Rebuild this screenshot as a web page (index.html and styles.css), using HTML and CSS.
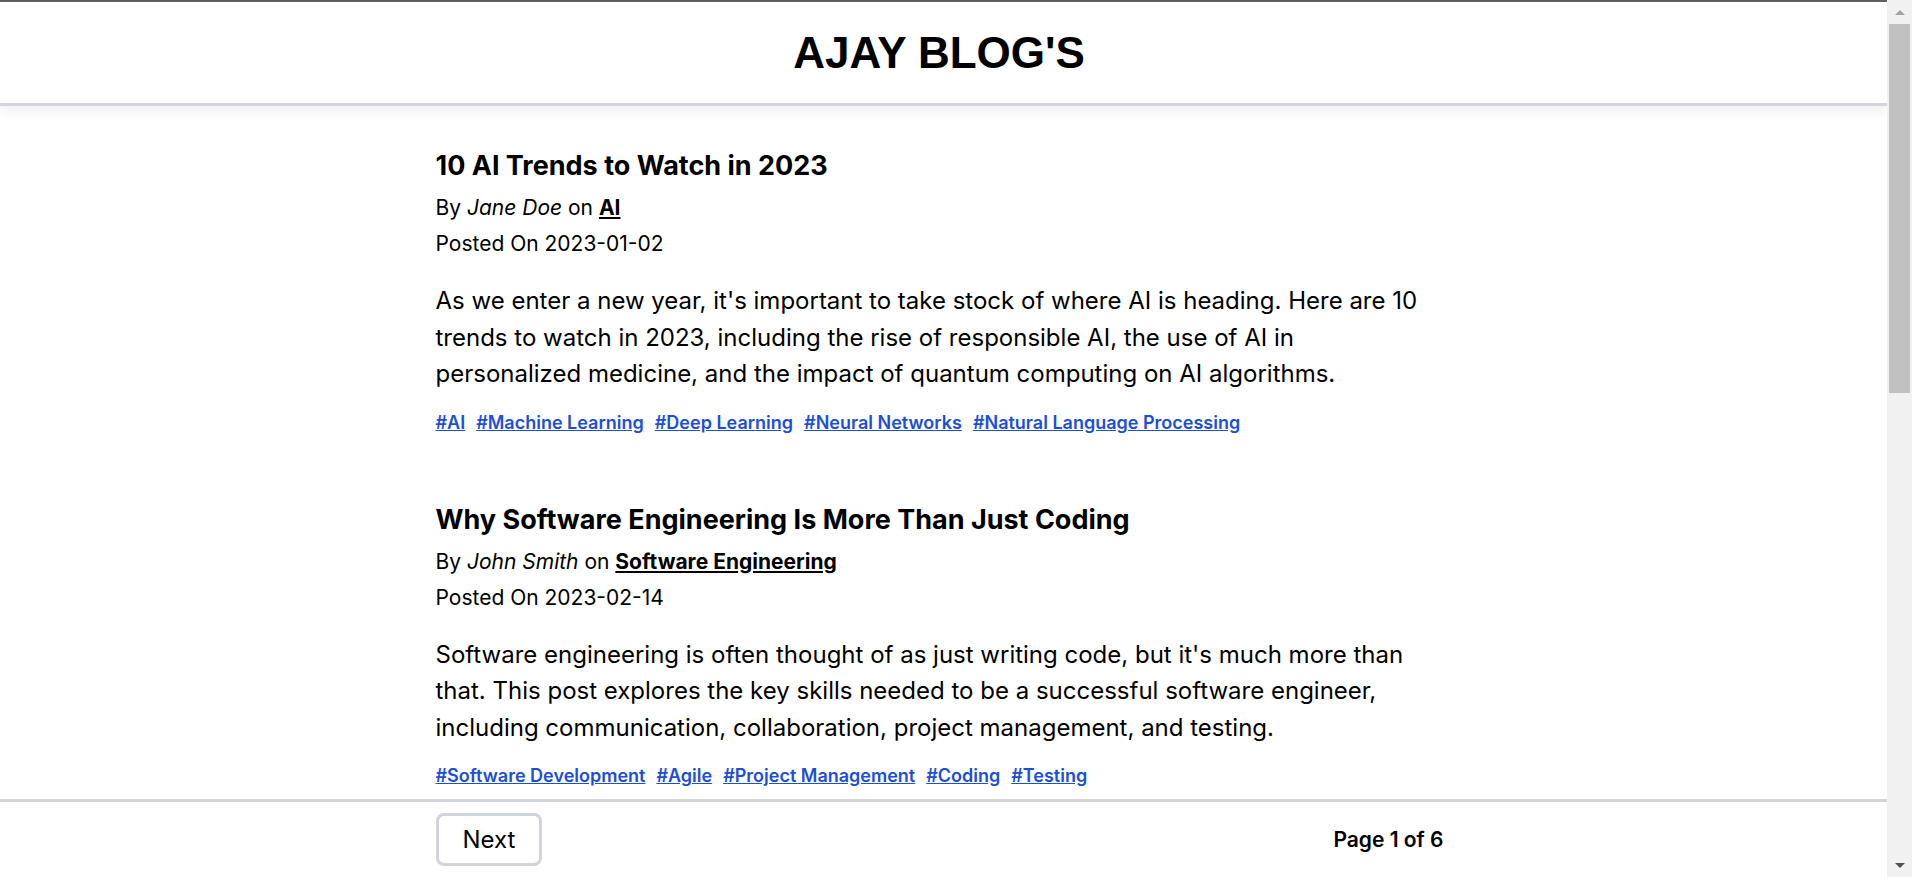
FILE: index.html
```html
<!DOCTYPE html>
<html lang="en">
<head>
<meta charset="utf-8">
<title>AJAY BLOG'S</title>
<link rel="stylesheet" href="styles.css">
</head>
<body>
<div class="page">
  <header class="site-header">
    <h1 class="site-title">AJAY BLOG'S</h1>
  </header>

  <main class="posts">
    <article class="post">
      <h2 class="post-title">10 AI Trends to Watch in 2023</h2>
      <p class="post-meta">By <em>Jane Doe</em> on <a class="post-category" href="#">AI</a></p>
      <p class="post-date">Posted On 2023-01-02</p>
      <p class="post-body">As we enter a new year, it's important to take stock of where AI is heading. Here are 10 trends to watch in 2023, including the rise of responsible AI, the use of AI in personalized medicine, and the impact of quantum computing on AI algorithms.</p>
      <ul class="post-tags">
        <li><a href="#">#AI</a></li>
        <li><a href="#">#Machine Learning</a></li>
        <li><a href="#">#Deep Learning</a></li>
        <li><a href="#">#Neural Networks</a></li>
        <li><a href="#">#Natural Language Processing</a></li>
      </ul>
    </article>

    <article class="post">
      <h2 class="post-title">Why Software Engineering Is More Than Just Coding</h2>
      <p class="post-meta">By <em>John Smith</em> on <a class="post-category" href="#">Software Engineering</a></p>
      <p class="post-date">Posted On 2023-02-14</p>
      <p class="post-body">Software engineering is often thought of as just writing code, but it's much more than that. This post explores the key skills needed to be a successful software engineer, including communication, collaboration, project management, and testing.</p>
      <ul class="post-tags">
        <li><a href="#">#Software Development</a></li>
        <li><a href="#">#Agile</a></li>
        <li><a href="#">#Project Management</a></li>
        <li><a href="#">#Coding</a></li>
        <li><a href="#">#Testing</a></li>
      </ul>
    </article>

    <article class="post">
      <h2 class="post-title">Getting Started with Cloud Computing</h2>
      <p class="post-meta">By <em>Jane Doe</em> on <a class="post-category" href="#">Cloud</a></p>
      <p class="post-date">Posted On 2023-03-05</p>
      <p class="post-body">Cloud computing has changed the way teams build and ship software. This post covers the basics of cloud services, deployment models, and how to choose the right provider for your project.</p>
      <ul class="post-tags">
        <li><a href="#">#Cloud</a></li>
        <li><a href="#">#DevOps</a></li>
        <li><a href="#">#Infrastructure</a></li>
      </ul>
    </article>
  </main>

  <footer class="pager">
    <div class="pager-inner">
      <button class="pager-next" type="button">Next</button>
      <span class="pager-status">Page 1 of 6</span>
    </div>
  </footer>
</div>

<div class="scrollbar" aria-hidden="true">
  <span class="scroll-btn scroll-up"></span>
  <div class="scroll-track"><span class="scroll-thumb"></span></div>
  <span class="scroll-btn scroll-down"></span>
</div>
</body>
</html>
```

FILE: styles.css
```css
html,
body {
  height: 100%;
}

body {
  margin: 0;
  display: grid;
  grid-template-columns: 1fr 25px;
  overflow: hidden;
  font-family: Inter, "Noto Sans", sans-serif;
  color: #000;
  background: #fff;
}

.page {
  height: 100vh;
  overflow-y: auto;
  scrollbar-width: none;
}

.page::-webkit-scrollbar {
  display: none;
}

/* scrollbar column */
.scrollbar {
  display: flex;
  flex-direction: column;
  background: #f1f1f1;
}

.scroll-btn {
  height: 24px;
  display: flex;
  align-items: center;
  justify-content: center;
}

.scroll-up::before {
  content: "";
  border-left: 5px solid transparent;
  border-right: 5px solid transparent;
  border-bottom: 5px solid #a3a3a3;
}

.scroll-down::before {
  content: "";
  border-left: 5px solid transparent;
  border-right: 5px solid transparent;
  border-top: 5px solid #505050;
}

.scroll-track {
  flex: 1;
  padding: 0 2px;
}

.scroll-thumb {
  display: block;
  height: 369px;
  background: #c1c1c1;
}

/* header */
.site-header {
  position: relative;
  z-index: 2;
  height: 101px;
  display: flex;
  align-items: center;
  justify-content: center;
  padding-right: 9px;
  background: #fff;
  border-top: 2px solid #5e5e5e;
  border-bottom: 3px solid #d4d4dc;
  box-shadow: 0 6px 10px rgba(0, 0, 0, 0.06);
}

.site-title {
  margin: 0;
  font-family: "Liberation Sans", Arial, sans-serif;
  font-size: 44px;
  font-weight: 700;
  line-height: 1;
}

/* posts */
.posts {
  max-width: 1016px;
  margin: 0 auto;
  padding: 44px 0 40px;
}

.post {
  max-width: 1000px;
  padding-bottom: 69px;
}

.post-title {
  margin: 0 0 8px;
  font-size: 27px;
  line-height: 32px;
  font-weight: 700;
}

.post-meta,
.post-date {
  margin: 0;
  font-size: 21px;
  line-height: 36px;
}

.post-category {
  color: #000;
  font-weight: 700;
  text-decoration: underline;
}

.post-body {
  margin: 21px 0 18px;
  font-size: 24px;
  line-height: 36.5px;
}

.post-tags {
  display: flex;
  flex-wrap: wrap;
  gap: 11px;
  margin: 0;
  padding: 0;
  list-style: none;
  font-size: 18px;
  line-height: 24px;
  font-weight: 600;
}

.post-tags a {
  color: #1d4ed8;
  text-decoration: underline;
}

/* pager */
.pager {
  position: sticky;
  bottom: 0;
  z-index: 3;
  height: 75px;
  background: #fff;
  border-top: 3px solid #d1d5db;
}

.pager-inner {
  max-width: 1016px;
  height: 100%;
  margin: 0 auto;
  display: flex;
  align-items: center;
  justify-content: space-between;
  padding-right: 8px;
  box-sizing: border-box;
}

.pager-next {
  height: 53px;
  padding: 0 24px;
  font-family: Inter, "Noto Sans", sans-serif;
  font-size: 24px;
  color: #000;
  background: #fff;
  border: 3px solid #d1d5db;
  border-radius: 8px;
  cursor: pointer;
}

.pager-status {
  font-size: 21px;
  font-weight: 600;
}
```
